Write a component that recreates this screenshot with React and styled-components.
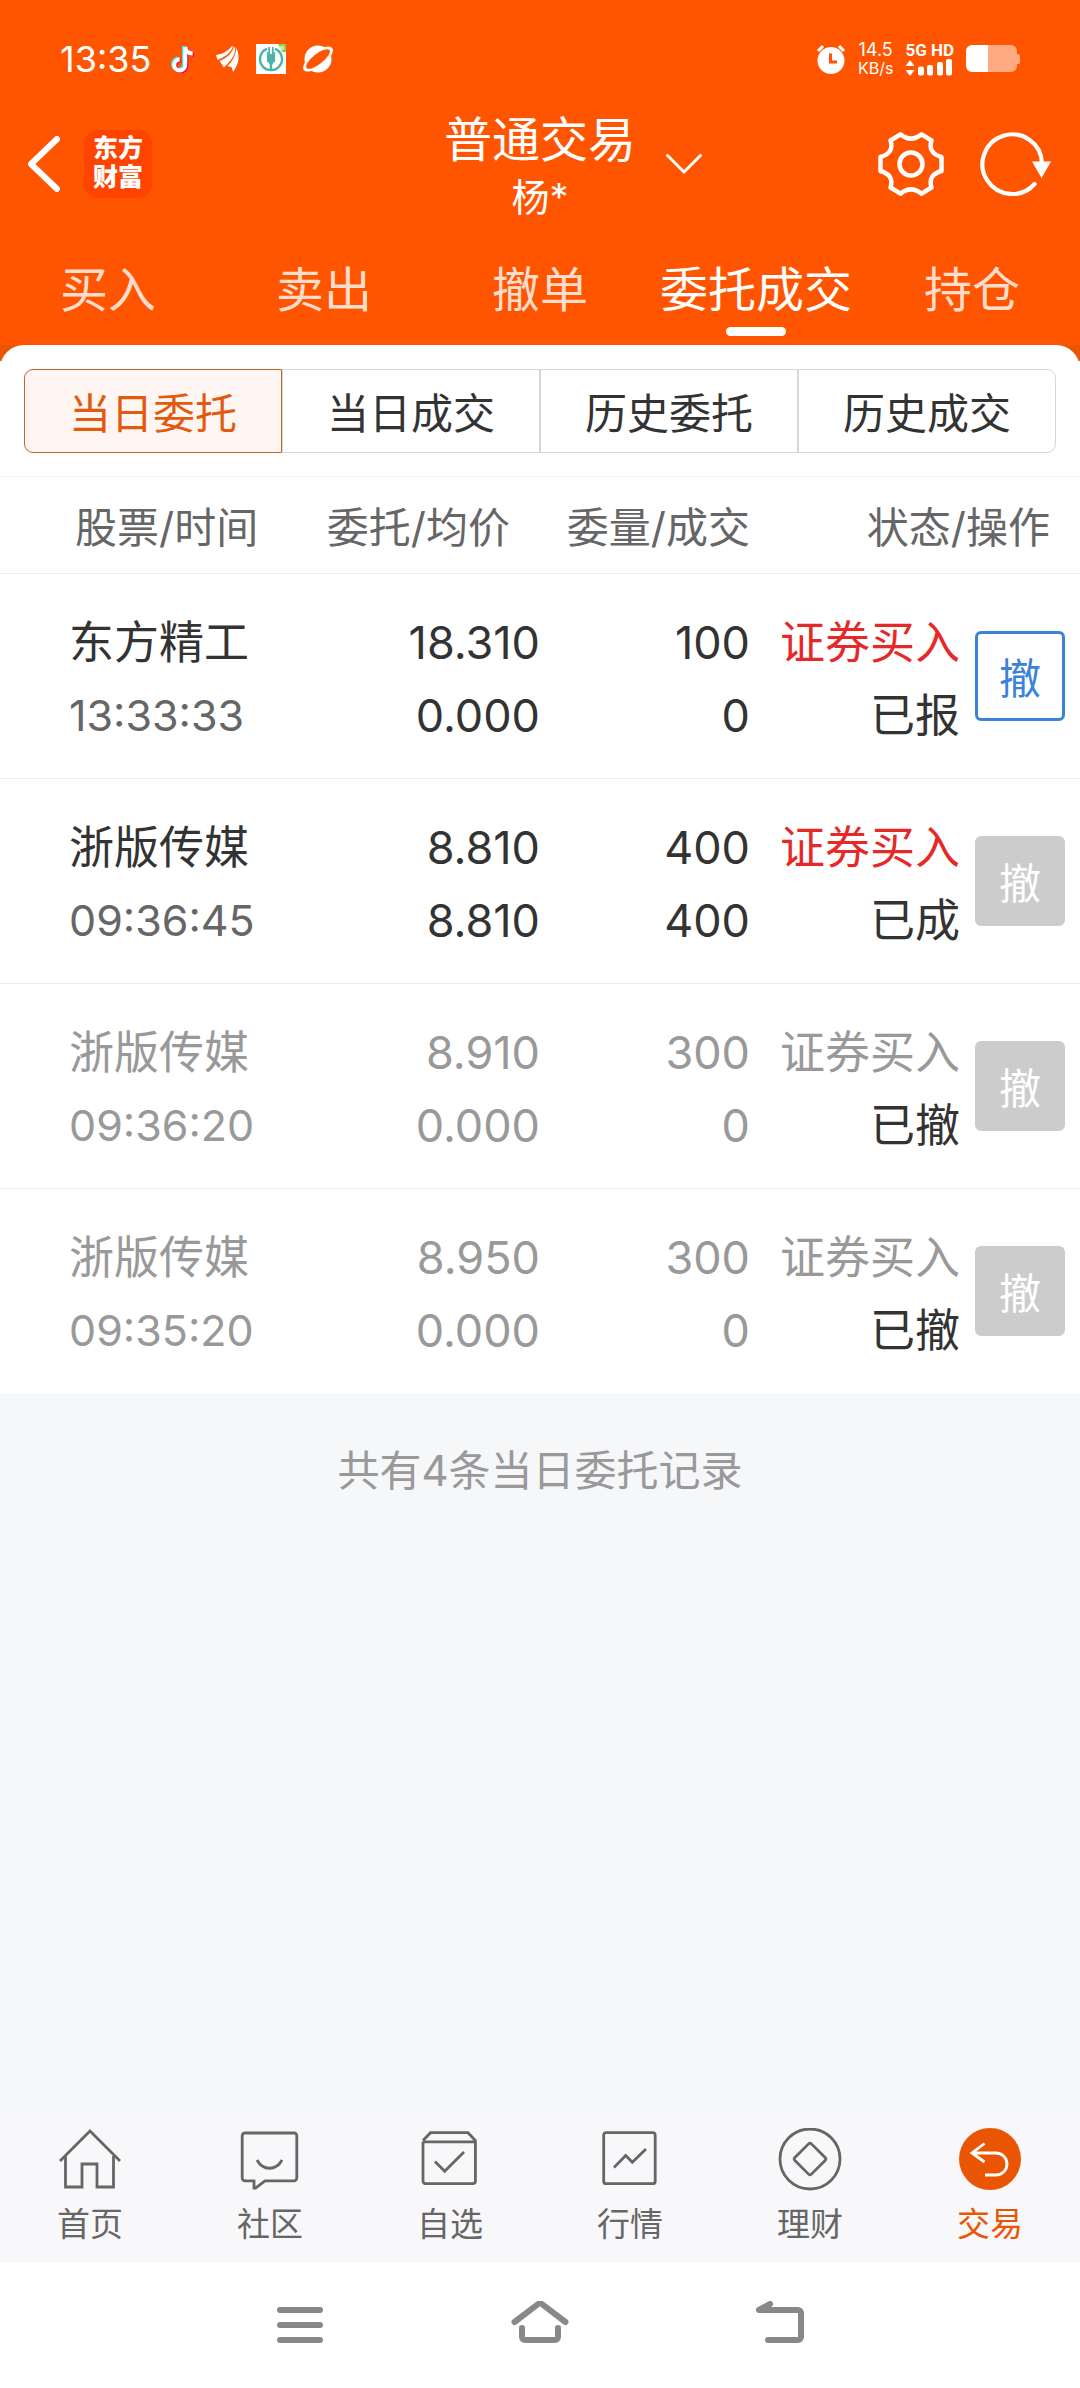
import { useState } from "react";
import styled, { createGlobalStyle } from "styled-components";

const orders = [
  {
    name: "东方精工",
    time: "13:33:33",
    price: "18.310",
    avgPrice: "0.000",
    amount: "100",
    filled: "0",
    side: "证券买入",
    status: "已报",
    state: "open",
  },
  {
    name: "浙版传媒",
    time: "09:36:45",
    price: "8.810",
    avgPrice: "8.810",
    amount: "400",
    filled: "400",
    side: "证券买入",
    status: "已成",
    state: "done",
  },
  {
    name: "浙版传媒",
    time: "09:36:20",
    price: "8.910",
    avgPrice: "0.000",
    amount: "300",
    filled: "0",
    side: "证券买入",
    status: "已撤",
    state: "cancelled",
  },
  {
    name: "浙版传媒",
    time: "09:35:20",
    price: "8.950",
    avgPrice: "0.000",
    amount: "300",
    filled: "0",
    side: "证券买入",
    status: "已撤",
    state: "cancelled",
  },
];

const mainTabs = ["买入", "卖出", "撤单", "委托成交", "持仓"];
const recordTabs = ["当日委托", "当日成交", "历史委托", "历史成交"];

const App = () => {
  const [mainTab, setMainTab] = useState("委托成交");
  const [recordTab, setRecordTab] = useState("当日委托");

  return (
    <>
      <GlobalStyle />
      <Page>
        <Header>
          <StatusBar />
          <TitleBar>
            <BarSide>
              <IconButton aria-label="返回">
                <BackIcon />
              </IconButton>
              <Logo>
                <span>东方</span>
                <span>财富</span>
              </Logo>
            </BarSide>
            <TitleBlock>
              <Title>普通交易</Title>
              <Account>杨*</Account>
            </TitleBlock>
            <BarActions>
              <SwitchButton aria-label="切换账户">
                <ChevronIcon />
              </SwitchButton>
              <IconButton aria-label="设置">
                <GearIcon />
              </IconButton>
              <IconButton aria-label="刷新">
                <RefreshIcon />
              </IconButton>
            </BarActions>
          </TitleBar>
          <MainTabs>
            {mainTabs.map((tab) => (
              <MainTab
                key={tab}
                $active={tab === mainTab}
                onClick={() => setMainTab(tab)}
              >
                {tab}
              </MainTab>
            ))}
          </MainTabs>
        </Header>

        <Content>
          <PanelBackdrop>
            <Panel>
              <Segments>
                {recordTabs.map((tab) => (
                  <Segment
                    key={tab}
                    $active={tab === recordTab}
                    onClick={() => setRecordTab(tab)}
                  >
                    {tab}
                  </Segment>
                ))}
              </Segments>
            </Panel>
          </PanelBackdrop>
          <OrderTable>
            <colgroup>
              <Col />
              <Col $width={260} />
              <Col $width={210} />
              <Col $width={210} />
              <Col $width={120} />
            </colgroup>
            <thead>
              <tr>
                <HeadCell $align="left">股票/时间</HeadCell>
                <HeadCell $inset>委托/均价</HeadCell>
                <HeadCell>委量/成交</HeadCell>
                <HeadCell $inset colSpan={2}>
                  状态/操作
                </HeadCell>
              </tr>
            </thead>
            <tbody>
              {orders.map((order) => (
                <OrderRow key={order.time} order={order} />
              ))}
            </tbody>
          </OrderTable>
          <Summary>共有{orders.length}条当日委托记录</Summary>
        </Content>

        <BottomTabs />
        <SystemNav />
      </Page>
    </>
  );
};

export default App;

const OrderRow = ({ order }) => {
  const muted = order.state === "cancelled";

  return (
    <Row $muted={muted}>
      <Cell $align="left">
        <Line>{order.name}</Line>
        <TimeLine $tone={muted ? undefined : "#666"}>{order.time}</TimeLine>
      </Cell>
      <Cell>
        <Line>{order.price}</Line>
        <Line>{order.avgPrice}</Line>
      </Cell>
      <Cell>
        <Line>{order.amount}</Line>
        <Line>{order.filled}</Line>
      </Cell>
      <Cell>
        <Line $tone={muted ? undefined : "#e62828"}>{order.side}</Line>
        <Line $tone="#333">{order.status}</Line>
      </Cell>
      <ActionCell>
        <CancelButton disabled={order.state !== "open"}>撤</CancelButton>
      </ActionCell>
    </Row>
  );
};

const StatusBar = () => (
  <StatusWrap>
    <StatusGroup>
      <Clock>13:35</Clock>
      <AppIcons>
        <svg width="26" height="30" viewBox="0 0 26 30" fill="none">
          <g strokeWidth="4">
            <path d="M14 2V20a5.500 5.500 0 1 1-5.500-5.500M14 2.500c.5 4 3.500 6.500 7.500 6.800" stroke="#25f4ee" />
            <path d="M16.500 4V22a5.500 5.500 0 1 1-5.500-5.500M16.500 4c.5 4 3.500 6.500 7.500 6.800" stroke="#e4104f" />
            <path d="M15.200 3V21a5.500 5.500 0 1 1-5.500-5.500M15.200 3c.5 4 3.500 6.500 7.500 6.800" stroke="#fff" />
          </g>
        </svg>
        <svg width="28" height="26" viewBox="-4 0 28 26" fill="#fff">
          <path d="M0 9C7 8 12 5 16 0l1 .6C15 7 9 11 1.500 14z" />
          <path d="M3.500 15C11 12 15.500 8 17.800 1l1.400.6C19.500 10 14.500 15 8 21.500z" />
          <path d="M11.500 20C17 15 19.800 9 20.200 2 24 9 23.500 17 17 26l-1.500-5z" />
        </svg>
        <svg width="30" height="30" viewBox="0 0 30 30" fill="none">
          <path d="M0 0h30v30H0z" fill="#fff" />
          <path d="M22 0h8v8h-4z" fill="#8fd14f" />
          <circle cx="26" cy="4" r="1.500" stroke="#fff" />
          <path d="M11 4.800a11 11 0 1 0 8 0" stroke="#4bb3a7" strokeWidth="2.400" />
          <path d="M15 10v15" stroke="#4bb3a7" strokeWidth="2.400" />
          <path d="M13.200 3v8M16.800 3v8" stroke="#4bb3a7" strokeWidth="1.800" />
          <path d="M11 10.500h8v7.500h-8z" fill="#4bb3a7" />
          <path d="M11.700 8v10M18.300 8v10M12.500 17l2.500 4 2.500-4" stroke="#4bb3a7" strokeWidth="1.500" />
        </svg>
        <svg width="32" height="30" viewBox="0 0 32 30">
          <circle cx="16" cy="15" r="13.500" fill="#fff" />
          <ellipse cx="16" cy="15" rx="18" ry="7.500" transform="rotate(-38 16 15)" fill="#fff" />
          <ellipse cx="16" cy="15" rx="14.500" ry="5.200" transform="rotate(-38 16 15)" fill="#f50" />
        </svg>
      </AppIcons>
    </StatusGroup>
    <StatusGroup>
      <svg width="30" height="30" viewBox="0 0 30 30" fill="none">
        <circle cx="15" cy="16.500" r="13.500" fill="#fff" />
        <path d="M2 7l5-5M28 7l-5-5" stroke="#fff" strokeWidth="3" />
        <path d="M14.500 9.500V18H21" stroke="#f50" strokeWidth="3" />
      </svg>
      <NetSpeed>
        <span>14.5</span>
        <small>KB/s</small>
      </NetSpeed>
      <Signal>
        5G HD
        <svg width="48" height="18" viewBox="0 0 48 18" fill="#fff">
          <path d="M5 1l4.500 6h-9zM5 17l4.500-6h-9z" />
          <rect x="13" y="7.500" width="6" height="9" rx="2" />
          <rect x="22" y="6" width="6" height="10.500" rx="2" />
          <rect x="32" y="3" width="6" height="13.500" rx="2" />
          <rect x="41" y="0" width="6" height="16.500" rx="2" />
        </svg>
      </Signal>
      <svg width="54" height="28" viewBox="0 0 54 28">
        <path
          d="M22 0h23a6 6 0 0 1 6 6v3h1a2 2 0 0 1 2 2v6a2 2 0 0 1-2 2h-1v2a6 6 0 0 1-6 6H22z"
          fill="#ffaa80"
        />
        <path d="M6 0h16v27H6a6 6 0 0 1-6-6V6a6 6 0 0 1 6-6z" fill="#fff" />
      </svg>
    </StatusGroup>
  </StatusWrap>
);

const BackIcon = () => (
  <svg width="32" height="56" viewBox="0 0 32 56" fill="none">
    <path d="M29 3L3 28l26 25" stroke="#fff" strokeWidth="6" strokeLinecap="round" strokeLinejoin="round" />
  </svg>
);

const ChevronIcon = () => (
  <svg width="36" height="20" viewBox="0 0 36 20" fill="none">
    <path d="M1.500 1.500L18 18 34.500 1.500" stroke="#fff" strokeWidth="3" strokeLinecap="round" strokeLinejoin="round" />
  </svg>
);

const GearIcon = () => (
  <svg width="66" height="64" viewBox="0 0 66 64" fill="none" stroke="#fff" strokeWidth="4.500" strokeLinejoin="round">
    <path d="M22.500 2.300Q33 11 43.500 2.300L53.500 8.500Q49.500 21 63.500 25V39Q49.500 43 53.500 55.500L43.500 61.700Q33 53 22.500 61.700L12.500 55.500Q16.500 43 2.500 39V25Q16.500 21 12.500 8.500Z" />
    <circle cx="33" cy="32" r="11.500" />
  </svg>
);

const RefreshIcon = () => (
  <svg width="72" height="64" viewBox="0 0 72 64" fill="none">
    <path d="M54.500 52A29.800 29.800 0 1 1 62 31" stroke="#fff" strokeWidth="4.200" strokeLinecap="round" />
    <path d="M52 29.500h19l-9.500 16.500z" fill="#fff" />
  </svg>
);

const bottomTabs = [
  {
    label: "首页",
    icon: (
      <>
        <path d="M2 33L32 3l30 30" />
        <path d="M7.500 28v31H24V36h15v23h16.500V28" />
      </>
    ),
  },
  {
    label: "社区",
    icon: (
      <>
        <path d="M7 5h49a2.800 2.800 0 0 1 2.800 2.800V50a2.800 2.800 0 0 1-2.800 2.800H27L17.500 60H16v-7.200H7A2.800 2.800 0 0 1 4.200 50V7.800A2.800 2.800 0 0 1 7 5z" />
        <path d="M19 32c6 11 19 11 25 0" />
      </>
    ),
  },
  {
    label: "自选",
    icon: (
      <>
        <path d="M5 13.500V53a2.700 2.700 0 0 0 2.700 2.700h47A2.700 2.700 0 0 0 57.400 53V12.500L50 4.700H12.500L5 12.500M5 13.800h52" />
        <path d="M17 33.500l9.700 9.800L46 24" />
      </>
    ),
  },
  {
    label: "行情",
    icon: (
      <>
        <rect x="5.700" y="4.700" width="51.500" height="51" rx="2.500" />
        <path d="M16 39.500l11.700-12 6.600 6.800L48 21" />
      </>
    ),
  },
  {
    label: "理财",
    icon: (
      <>
        <circle cx="32" cy="31" r="30" />
        <rect x="20.300" y="19.300" width="23.400" height="23.400" rx="2" transform="rotate(45 32 31)" />
      </>
    ),
  },
  {
    label: "交易",
    active: true,
    icon: (
      <>
        <circle cx="32" cy="31" r="31" fill="#ea5504" stroke="none" />
        <path d="M26.500 15.500L14 25l12.500 9M14 25h24a11 11 0 0 1 0 22H27" stroke="#fff" />
      </>
    ),
  },
];

const BottomTabs = () => (
  <TabBar>
    {bottomTabs.map(({ label, icon, active }) => (
      <TabLink key={label} href="#" $active={active}>
        <svg width="64" height="64" viewBox="0 0 64 64" fill="none" stroke="#666" strokeWidth="2.800">
          {icon}
        </svg>
        {label}
      </TabLink>
    ))}
  </TabBar>
);

const SystemNav = () => (
  <SystemBar>
    <IconButton aria-label="最近任务">
      <NavIcon viewBox="0 2 60 48">
        <path d="M10 11h40M10 26h40M10 41h40" />
      </NavIcon>
    </IconButton>
    <IconButton aria-label="主屏幕">
      <NavIcon viewBox="0 2 60 48">
        <path d="M4.500 23L28 5.200a3.200 3.200 0 0 1 4 0L55.500 23M12 29v9a3 3 0 0 0 3 3h30a3 3 0 0 0 3-3v-9" />
      </NavIcon>
    </IconButton>
    <IconButton aria-label="返回上一页">
      <NavIcon viewBox="0 2 60 48">
        <path d="M20 5L9 11h39a3 3 0 0 1 3 3v24a3 3 0 0 1-3 3H18" />
      </NavIcon>
    </IconButton>
  </SystemBar>
);

// Styled Components
const GlobalStyle = createGlobalStyle`
  *,
  *::before,
  *::after {
    box-sizing: border-box;
  }

  body {
    margin: 0;
    background: #f6f7f9;
    color: #333;
    font-family: Inter, "Noto Sans CJK SC", sans-serif;
  }

  svg {
    display: block;
  }

  button {
    padding: 0;
    border: none;
    background: none;
    font: inherit;
    color: inherit;
    cursor: pointer;
  }
`;

const Page = styled.div`
  min-height: 100vh;
  display: flex;
  flex-direction: column;
`;

const Header = styled.header`
  background: #ff5500;
  color: #fff;
`;

const StatusWrap = styled.div`
  display: flex;
  justify-content: space-between;
  height: 106px;
  padding: 12px 60px 0;
`;

const StatusGroup = styled.div`
  display: flex;
  align-items: center;
  gap: 12px;
`;

const Clock = styled.span`
  font-size: 36px;
`;

const AppIcons = styled.div`
  display: flex;
  align-items: center;
  gap: 16px;
  padding-left: 7px;
`;

const NetSpeed = styled.div`
  display: flex;
  flex-direction: column;
  align-items: center;
  font-size: 18px;
  line-height: 19px;

  small {
    font-size: 16px;
  }
`;

const Signal = styled.div`
  font-family: Roboto, sans-serif;
  font-size: 17px;
  font-weight: 700;
  line-height: 17px;
`;

const TitleBar = styled.div`
  display: grid;
  grid-template-columns: 1fr auto 1fr;
  align-items: center;
  padding: 0 28px;
`;

const BarSide = styled.div`
  display: flex;
  align-items: center;
  gap: 24px;
`;

const BarActions = styled(BarSide)`
  gap: 36px;
`;

const IconButton = styled.button`
  display: flex;
  align-items: center;
  justify-content: center;
`;

const SwitchButton = styled(IconButton)`
  margin: 0 auto 0 30px;
`;

const Logo = styled.div`
  display: flex;
  flex-direction: column;
  align-items: center;
  justify-content: center;
  width: 68px;
  height: 68px;
  padding-bottom: 2px;
  border-radius: 14px;
  background: #ff4400;
  font-size: 25px;
  font-weight: 900;
  line-height: 29px;
`;

const TitleBlock = styled.div`
  text-align: center;
`;

const Title = styled.h1`
  margin: 0;
  font-size: 48px;
  font-weight: 400;
  line-height: 68px;
`;

const Account = styled.div`
  font-size: 38px;
  line-height: 46px;
  padding-bottom: 2px;
`;

const MainTabs = styled.nav`
  display: grid;
  grid-template-columns: repeat(5, 1fr);
`;

const MainTab = styled.button`
  display: flex;
  flex-direction: column;
  align-items: center;
  padding: 38px 0 9px;
  color: ${({ $active }) => ($active ? "#fff" : "#ffddcc")};
  font-size: 48px;
  line-height: 60px;

  &::after {
    content: "";
    width: 60px;
    height: 9px;
    margin-top: 7px;
    border-radius: 5px;
    background: ${({ $active }) => ($active ? "#fff" : "transparent")};
  }
`;

const Content = styled.main`
  flex: 1;
`;

const PanelBackdrop = styled.div`
  background: linear-gradient(#ea5504 16px, #fff 16px);
`;

const Panel = styled.div`
  padding: 24px 24px 23px;
  border-bottom: 1px solid #f4f4f4;
  border-radius: 24px 24px 0 0;
  background: #fff;
`;

const Segments = styled.div`
  display: grid;
  grid-template-columns: repeat(4, 1fr);
`;

const Segment = styled.button`
  height: 84px;
  padding-bottom: 2px;
  border: 1px solid ${({ $active }) => ($active ? "#c4662e" : "#d5d8d9")};
  background: ${({ $active }) => ($active ? "#fff6f3" : "#fff")};
  color: ${({ $active }) => ($active ? "#e25a0e" : "#333")};
  font-size: 42px;

  &:first-child {
    border-radius: 9px 0 0 9px;
  }

  &:last-child {
    border-radius: 0 9px 9px 0;
  }
`;

const OrderTable = styled.table`
  width: 100%;
  table-layout: fixed;
  border-spacing: 0;
  background: #fff;
`;

const Col = styled.col`
  width: ${({ $width }) => ($width ? `${$width}px` : "auto")};
`;

const HeadCell = styled.th`
  height: 97px;
  padding: 0 ${({ $inset }) => ($inset ? 30 : 0)}px 2px
    ${({ $align }) => ($align === "left" ? 75 : 0)}px;
  border-bottom: 1px solid #ececec;
  color: #666;
  font-size: 42px;
  font-weight: 400;
  text-align: ${({ $align }) => $align || "right"};
  white-space: nowrap;
`;

const Row = styled.tr`
  color: ${({ $muted }) => ($muted ? "#999" : "#333")};
`;

const Cell = styled.td`
  padding: 32px 0 26px ${({ $align }) => ($align === "left" ? 69 : 0)}px;
  border-bottom: 1px solid #ececec;
  text-align: ${({ $align }) => $align || "right"};
  white-space: nowrap;

  tr:last-child > & {
    border-bottom-color: transparent;
  }
`;

const Line = styled.div`
  color: ${({ $tone }) => $tone || "inherit"};
  font-size: 45px;
  line-height: 73px;
`;

const TimeLine = styled(Line)`
  font-size: 43px;
`;

const ActionCell = styled(Cell)`
  padding: 0 15px 0 0;
  vertical-align: middle;
`;

const CancelButton = styled.button`
  width: 90px;
  height: 90px;
  padding-bottom: 2px;
  border: 3px solid #3b82d9;
  border-radius: 6px;
  background: #fff;
  color: #3b82d9;
  font-size: 42px;
  vertical-align: middle;

  &:disabled {
    border-color: #ccc;
    background: #ccc;
    color: #fff;
    cursor: default;
  }
`;

const Summary = styled.p`
  margin: 0;
  padding: 47px 0;
  color: #999;
  font-size: 42px;
  line-height: 60px;
  text-align: center;
`;

const TabBar = styled.nav`
  display: grid;
  grid-template-columns: repeat(6, 1fr);
  padding: 12px 0 14px;
  background: #f8f8fa;
`;

const TabLink = styled.a`
  display: flex;
  flex-direction: column;
  align-items: center;
  gap: 8px;
  color: ${({ $active }) => ($active ? "#ea5504" : "#666")};
  font-size: 33px;
  line-height: 48px;
  text-decoration: none;
`;

const SystemBar = styled.nav`
  display: flex;
  align-items: center;
  justify-content: center;
  gap: 180px;
  height: 126px;
  background: #fff;
`;

const NavIcon = styled.svg`
  width: 60px;
  height: 48px;
  fill: none;
  stroke: #888;
  stroke-width: 6;
  stroke-linecap: round;
  stroke-linejoin: round;
`;
